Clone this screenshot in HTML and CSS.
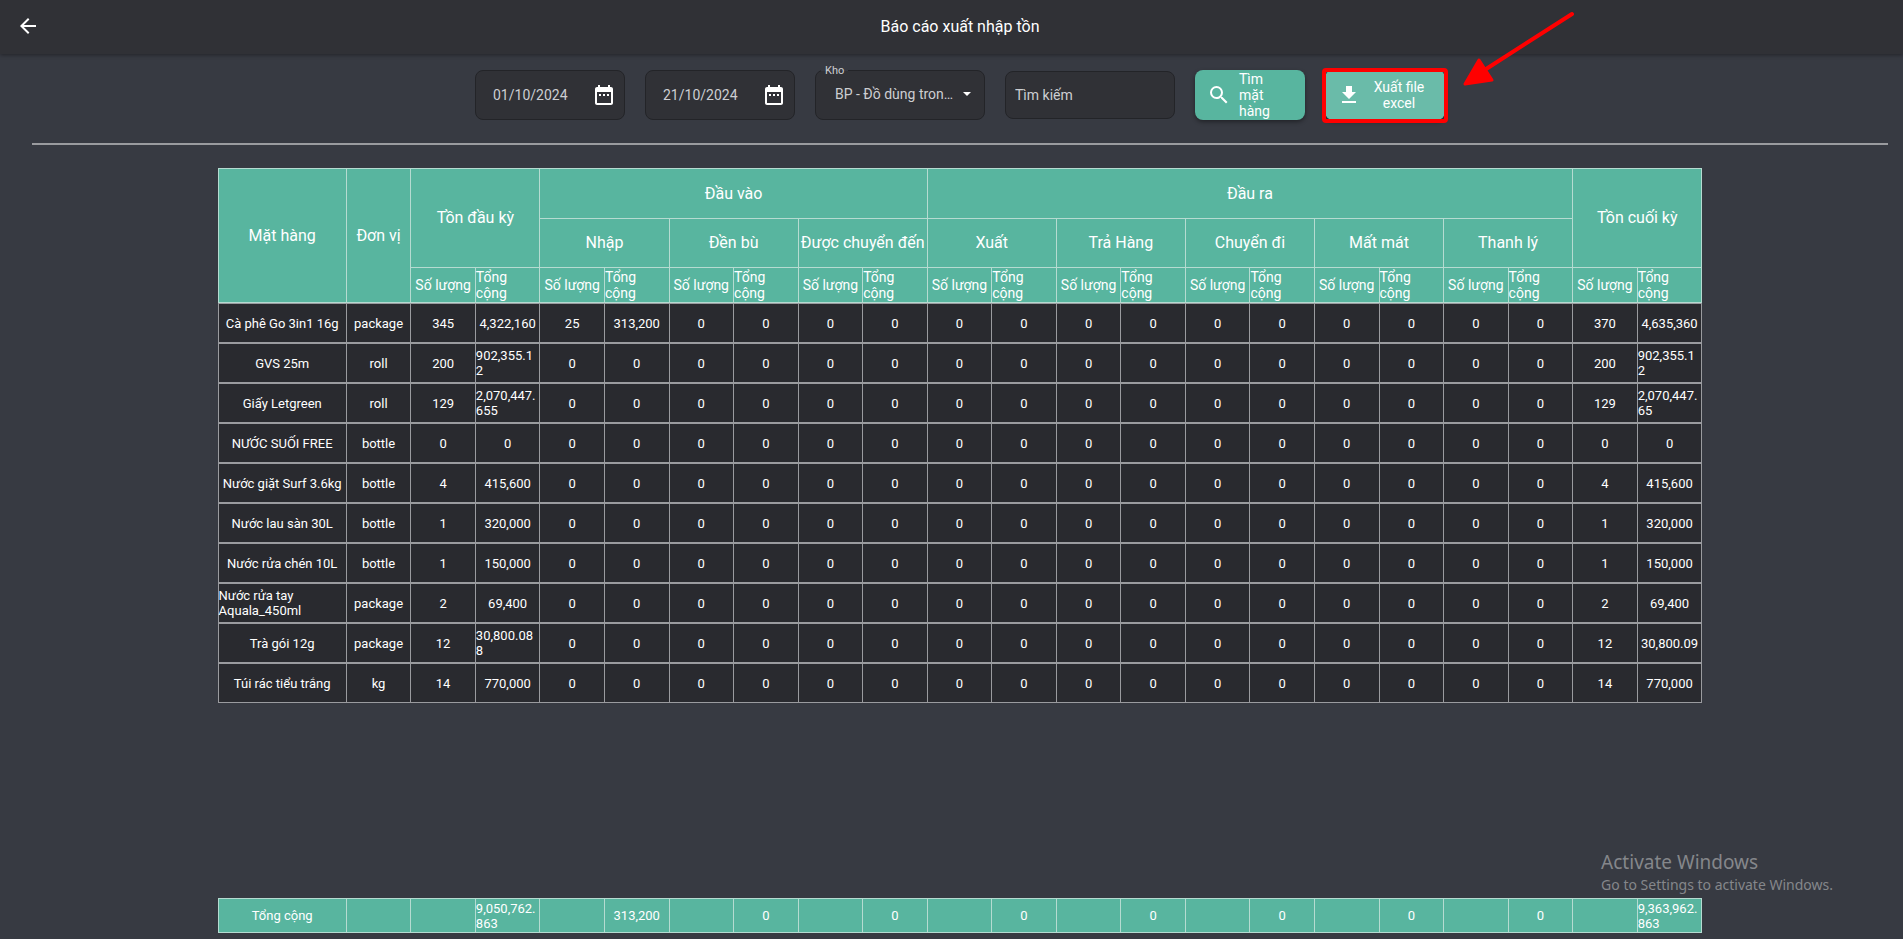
FILE: index.html
```
<!DOCTYPE html>
<html lang="vi">
<head>
<meta charset="utf-8">
<title>Báo cáo xuất nhập tồn</title>
<link rel="stylesheet" href="styles.css">
</head>
<body>
<header class="appbar">
  <button class="back" aria-label="Quay lại"><svg viewBox="0 0 24 24" width="24" height="24"><path d="M20 11H7.83l5.59-5.59L12 4l-8 8 8 8 1.41-1.41L7.83 13H20z"/></svg></button>
  <h1 class="title">Báo cáo xuất nhập tồn</h1>
</header>
<main class="page">
  <form class="filters">
    <div class="field date"><input type="text" value="01/10/2024" aria-label="Từ ngày"><button type="button" class="pick" aria-label="Chọn ngày"><svg viewBox="0 0 24 24" width="24" height="24"><path d="M9 11H7v2h2zm4 0h-2v2h2zm4 0h-2v2h2zm2-7h-1V2h-2v2H8V2H6v2H5c-1.1 0-2 .9-2 2v14c0 1.100.9 2 2 2h14c1.100 0 2-.9 2-2V6c0-1.100-.9-2-2-2zm0 16H5V9h14z"/></svg></button></div>
    <div class="field date"><input type="text" value="21/10/2024" aria-label="Đến ngày"><button type="button" class="pick" aria-label="Chọn ngày"><svg viewBox="0 0 24 24" width="24" height="24"><path d="M9 11H7v2h2zm4 0h-2v2h2zm4 0h-2v2h2zm2-7h-1V2h-2v2H8V2H6v2H5c-1.100 0-2 .9-2 2v14c0 1.100.9 2 2 2h14c1.100 0 2-.9 2-2V6c0-1.100-.9-2-2-2zm0 16H5V9h14z"/></svg></button></div>
    <div class="field choice">
      <label class="float" for="kho">Kho</label>
      <select id="kho"><option>BP - Đồ dùng tron…</option></select>
      <svg class="caret" viewBox="0 0 10 5" width="8" height="4"><path d="M0 0h10L5 5z"/></svg>
    </div>
    <input class="field search" type="text" placeholder="Tìm kiếm" aria-label="Tìm kiếm">
    <button type="button" class="btn find"><svg viewBox="0 0 24 24" width="24" height="24"><path d="M15.500 14h-.79l-.28-.27A6.470 6.470 0 0 0 16 9.500 6.500 6.500 0 1 0 9.500 16c1.610 0 3.090-.59 4.230-1.570l.27.28v.79l5 4.990L20.490 19zm-6 0C7.010 14 5 11.990 5 9.500S7.010 5 9.500 5 14 7.010 14 9.500 11.990 14 9.500 14z"/></svg><span>Tìm mặt hàng</span></button>
    <div class="marked">
      <button type="button" class="btn export"><svg viewBox="0 0 24 24" width="24" height="24"><path d="M19 9h-4V3H9v6H5l7 7zM5 18v2h14v-2z"/></svg><span>Xuất file excel</span></button>
      <svg class="arrow" viewBox="0 0 112 76" width="112" height="76"><path class="shaft" d="M109 3L20 60"/><path class="tip" d="M2 73L16 49L29 69Z"/></svg>
    </div>
  </form>
  <hr class="rule">
  <table class="grid" id="report">
    <colgroup id="cols"></colgroup>
    <thead>
      <tr class="h1"><th rowspan="3">Mặt hàng</th><th rowspan="3">Đơn vị</th><th colspan="2" rowspan="2">Tồn đầu kỳ</th><th colspan="6">Đầu vào</th><th colspan="10">Đầu ra</th><th colspan="2" rowspan="2">Tồn cuối kỳ</th></tr>
      <tr class="h2"><th colspan="2">Nhập</th><th colspan="2">Đền bù</th><th colspan="2">Được chuyển đến</th><th colspan="2">Xuất</th><th colspan="2">Trả Hàng</th><th colspan="2">Chuyển đi</th><th colspan="2">Mất mát</th><th colspan="2">Thanh lý</th></tr>
      <tr class="h3" id="subheads"></tr>
    </thead>
    <tbody id="rows"></tbody>
  </table>
  <table class="grid total"><colgroup id="totalcols"></colgroup><tbody id="totals"></tbody></table>
</main>
<aside class="notice"><p class="notice-title">Activate Windows</p><p class="notice-text">Go to Settings to activate Windows.</p></aside>
<script src="script.js"></script>
</body>
</html>
```
FILE: styles.css
```
* { box-sizing: border-box; }
body {
  margin: 0;
  min-height: 100vh;
  display: flex;
  flex-direction: column;
  background: #373a42;
  color: #fff;
  font: 14px/16px Roboto, "Liberation Sans", sans-serif;
}
button, input, select { font: inherit; color: inherit; }
button { border: 0; padding: 0; background: none; cursor: pointer; }
svg { fill: #fff; flex: none; display: block; }

.appbar {
  display: flex;
  align-items: center;
  height: 54px;
  padding: 0 15px 2px 16px;
  background: #303136;
  box-shadow: 0 1px 4px rgba(0, 0, 0, .4);
}
.title { flex: 1; margin: 0; padding: 1px 8px 0 0; text-align: center; font-size: 16px; line-height: 20px; font-weight: 400; }

.page { flex: 1; display: flex; flex-direction: column; align-items: center; padding: 16px 15px 6px 32px; }
.filters { display: flex; align-items: center; gap: 20px; }
.field {
  position: relative;
  height: 50px;
  border: 1px solid #232428;
  border-radius: 8px;
  background: #303136;
  color: #cdced2;
}
.field input, .field select { border: 0; background: none; outline: 0; padding: 0; appearance: none; }
.date { width: 150px; display: flex; align-items: center; padding: 0 8px 0 17px; }
.date input { flex: 1; min-width: 0; }
.choice { width: 170px; display: flex; align-items: center; padding: 0 13px 2px 19px; }
.choice select { flex: 1; min-width: 0; height: 24px; }
.float { position: absolute; top: -8px; left: 5px; padding: 0 4px; background: linear-gradient(#373a42 8px, #303136 8px); font-size: 11px; line-height: 16px; }
.search { width: 170px; height: 48px; padding: 0 9px; }
.search::placeholder { color: #cdced2; opacity: 1; }
.btn { display: flex; align-items: center; height: 50px; border-radius: 8px; background: #58b59f; box-shadow: 0 2px 4px rgba(0, 0, 0, .4); }
.find { width: 110px; gap: 8px; padding: 0 24px 0 12px; text-align: left; }
.export { width: 120px; padding: 0 16px 0 12px; background: #6abba9; }
.export span { flex: 1; padding-left: 8px; text-align: center; }
.marked { position: relative; }
.marked::after { content: ""; position: absolute; inset: -2px -3px -3px; border: 4px solid #f00; border-radius: 4px; pointer-events: none; }
.arrow { position: absolute; left: 138px; top: -59px; }
.shaft { stroke: #f00; stroke-width: 4; stroke-linecap: round; }
.tip { fill: #f00; stroke: #f00; stroke-width: 3; stroke-linejoin: round; }

.rule { width: 100%; height: 2px; margin: 23px 0; border: 0; background: #9a9b9f; }

.grid { width: 80%; table-layout: fixed; border-collapse: separate; border-spacing: 0; }
.grid th, .grid td { padding: 0; border: 0 solid #9a9b9f; border-width: 1px 1px 0 0; vertical-align: middle; }
.grid th { background: #58b59f; border-color: #b5dbd1; font-size: 16px; line-height: 20px; font-weight: 400; white-space: nowrap; }
.grid .wide { width: 8.7%; }
.grid .h1 { height: 50px; }
.grid .h2 { height: 49px; }
.grid .h3 { height: 36px; }
.grid .h3 th { font-size: 14px; line-height: 16px; white-space: normal; }
.grid .h3 th, .grid thead th[rowspan="3"] { border-bottom-width: 1px; }
.grid .h1 th:first-child, .grid td:first-child { border-left-width: 1px; }
.grid td { height: 40px; border-bottom-width: 1px; background: #292a2f; font-size: 13px; line-height: 15px; }
.cell { display: flex; justify-content: center; text-align: left; }
.cell span { overflow-wrap: anywhere; }
.total { margin-top: auto; }
.total td { height: 35px; background: #58b59f; border-color: #b5dbd1; }

.notice { position: absolute; right: 70px; bottom: 44px; color: #85878b; font-family: "Noto Sans", "Open Sans", sans-serif; pointer-events: none; }
.notice p { margin: 0; }
.notice-title { font-size: 19px; line-height: 26px; }
.notice-text { font-size: 14px; line-height: 20px; }
```
FILE: script.js
```
const zeros = n => Array(n).fill("0");
const items = [
  ["Cà phê Go 3in1 16g", "package", "345", "4,322,160", "25", "313,200", ...zeros(14), "370", "4,635,360"],
  ["GVS 25m", "roll", "200", "902,355.12", ...zeros(16), "200", "902,355.12"],
  ["Giấy Letgreen", "roll", "129", "2,070,447.655", ...zeros(16), "129", "2,070,447.65"],
  ["NƯỚC SUỐI FREE", "bottle", "0", "0", ...zeros(16), "0", "0"],
  ["Nước giặt Surf 3.6kg", "bottle", "4", "415,600", ...zeros(16), "4", "415,600"],
  ["Nước lau sàn 30L", "bottle", "1", "320,000", ...zeros(16), "1", "320,000"],
  ["Nước rửa chén 10L", "bottle", "1", "150,000", ...zeros(16), "1", "150,000"],
  ["Nước rửa tay Aquala_450ml", "package", "2", "69,400", ...zeros(16), "2", "69,400"],
  ["Trà gói 12g", "package", "12", "30,800.088", ...zeros(16), "12", "30,800.09"],
  ["Túi rác tiểu trắng", "kg", "14", "770,000", ...zeros(16), "14", "770,000"]
];
const totals = ["Tổng cộng", "", "", "9,050,762.863", "", "313,200"];
for (let i = 0; i < 7; i++) totals.push("", "0");
totals.push("", "9,363,962.863");

const inner = text => `<div class="cell"><span>${text}</span></div>`;
const row = cells => `<tr>${cells.map(c => `<td>${inner(c)}</td>`).join("")}</tr>`;
const cols = '<col class="wide">' + "<col>".repeat(21);
document.getElementById("cols").innerHTML = cols;
document.getElementById("totalcols").innerHTML = cols;
document.getElementById("subheads").innerHTML =
  `<th>${inner("Số lượng")}</th><th>${inner("Tổng cộng")}</th>`.repeat(10);
document.getElementById("rows").innerHTML = items.map(row).join("");
document.getElementById("totals").innerHTML = row(totals);
```
